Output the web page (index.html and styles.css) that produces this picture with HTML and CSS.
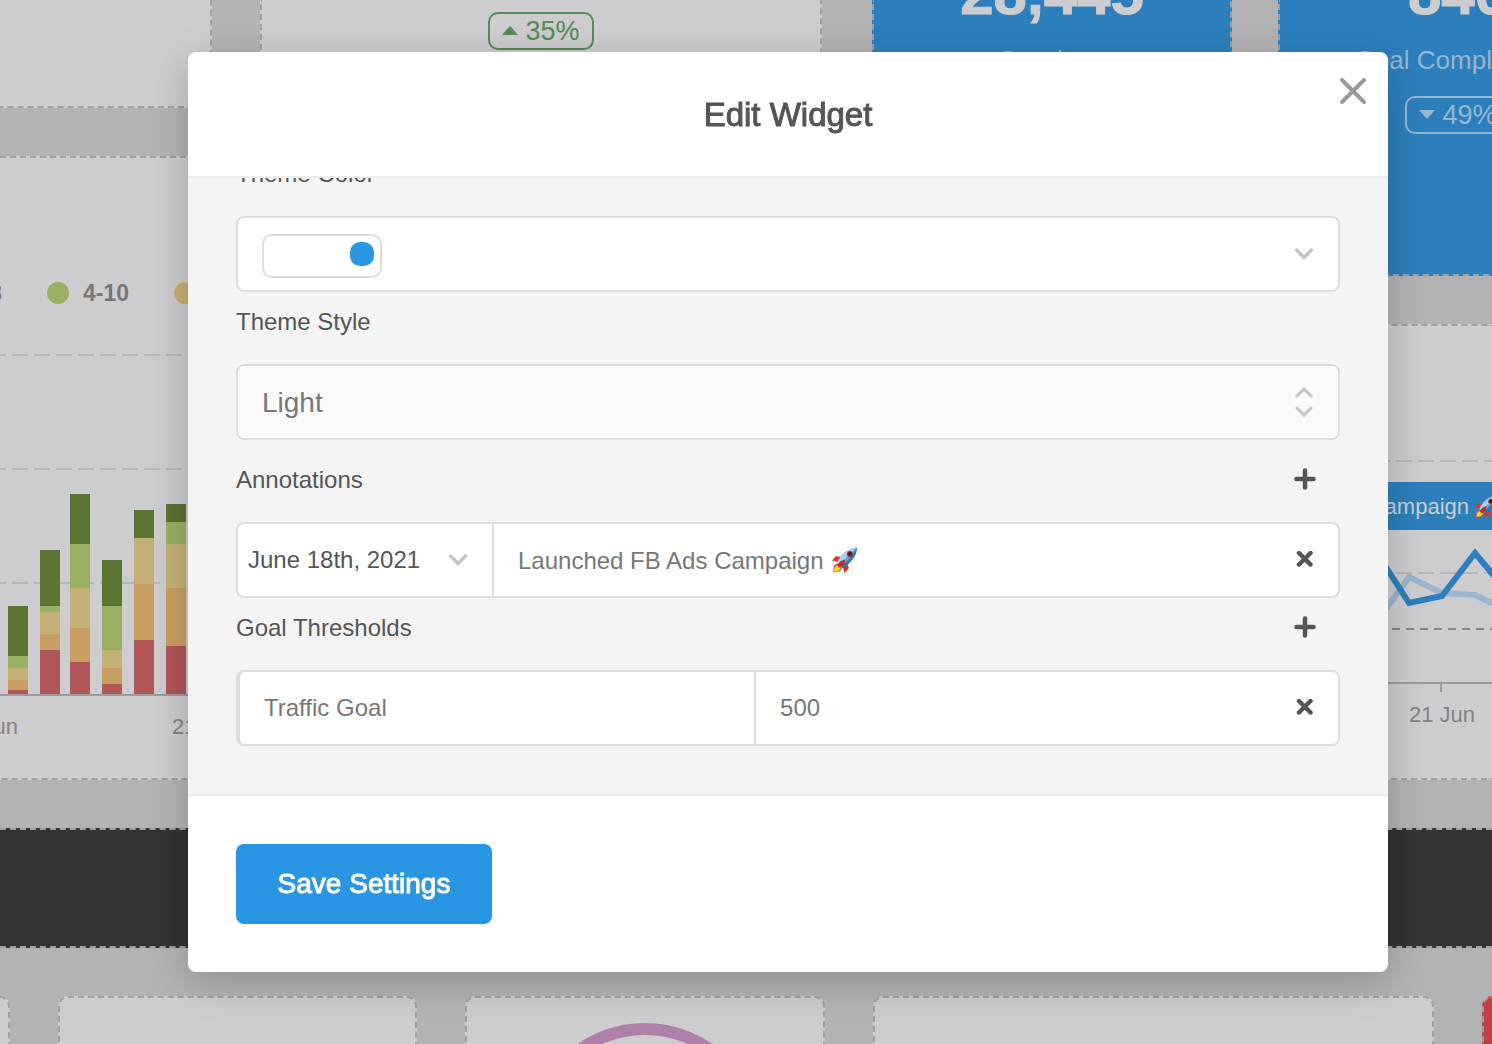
FILE: index.html
```html
<!DOCTYPE html>
<html lang="en">
    <head>
        <meta charset="utf-8">
        <meta name="viewport" content="width=device-width">
        <title>Edit Widget</title>
        <link rel="stylesheet" href="styles.css">
    </head>
    <body>
        <!-- Shared icons -->
        <svg class="defs" aria-hidden="true">
            <symbol id="rocket" viewBox="0 0 24 24">
                <path d="M9 9.500 L3.500 8.500 L0 12.500 L5.500 13.500 Z" fill="#e8301c"/>
                <path d="M14.500 15 L15.500 19.500 L11.500 24 L10 18 Z" fill="#e8301c"/>
                <path d="M4.500 15 L1.500 17.500 L1 23.500 L7 22.500 L9.500 19.500 Z" fill="#f0611c"/>
                <path d="M5 17 L2.500 19 L1.500 23 L6 22 L8 19.500 Z" fill="#fcd62c"/>
                <path d="M4.500 14.500 C8 7 15 1 23 0.500 C23.500 8 17 15.500 9.500 19.500 Z" fill="#2b78b4"/>
                <path d="M4.500 14.500 C8 7 15 1 23 0.500 L6.800 17 Z" fill="#a9d3ec"/>
                <path d="M6.500 16 C11 12 17 6 23 0.500 C19 8 14 13 8.500 17.800 Z" fill="#5fa8d8"/>
                <path d="M8 13 L12 11.500 L11.500 15.500 L7 19 L5 16.500 Z" fill="#c9281c"/>
                <circle cx="16.500" cy="6.500" r="2.700" fill="#b3211c"/>
                <circle cx="16.500" cy="6.500" r="1.600" fill="#14263a"/>
            </symbol>
            <symbol id="chevron" viewBox="0 0 20 12">
                <path d="M2.500 2 L10 9.500 L17.500 2" fill="none" stroke="#c4c4c4" stroke-width="3.500" stroke-linecap="round"/>
            </symbol>
            <symbol id="plus" viewBox="0 0 22 22">
                <path d="M11 2.500 V19.500 M2.500 11 H19.500" stroke="#555" stroke-width="4.500" stroke-linecap="round"/>
            </symbol>
            <symbol id="remove" viewBox="0 0 18 18">
                <path d="M3 2 L14.500 13.500 M14.500 2 L3 13.500" stroke="#555" stroke-width="4.500" stroke-linecap="round"/>
            </symbol>
        </svg>

        <main class="dashboard">
            <div class="top">
                <div class="left-col">
                    <div class="left-row">
                        <section class="card cut-top cut-left"></section>
                        <section class="card cut-top">
                            <span class="pill up"><svg width="16" height="10"><path d="M0 9 L8 0 L16 9 Z" fill="currentColor"/></svg>35%</span>
                        </section>
                    </div>
                    <section class="card cut-left bar-card">
                        <div class="legend">
                            <span class="legend-first">3</span>
                            <span class="legend-item"><i class="dot light-green"></i>4-10</span>
                            <span class="legend-item"><i class="dot yellow"></i>11-20</span>
                        </div>
                        <svg class="plot" viewBox="0 305 820 450" width="820" height="450">
                            <path class="grid" d="M-10 355 H820 M-10 469 H820 M-10 583 H820"/>
                            <g fill="#5a7432">
                                <rect x="8" y="606" width="20" height="50"/>
                                <rect x="40" y="550" width="20" height="56"/>
                                <rect x="70" y="494" width="20" height="50"/>
                                <rect x="102" y="560" width="20" height="46"/>
                                <rect x="134" y="510" width="20" height="28"/>
                                <rect x="166" y="504" width="20" height="18"/>
                            </g>
                            <g fill="#97b062">
                                <rect x="8" y="656" width="20" height="12"/>
                                <rect x="40" y="606" width="20" height="6"/>
                                <rect x="70" y="544" width="20" height="44"/>
                                <rect x="102" y="606" width="20" height="44"/>
                                <rect x="166" y="522" width="20" height="22"/>
                            </g>
                            <g fill="#c5b177">
                                <rect x="8" y="668" width="20" height="12"/>
                                <rect x="40" y="612" width="20" height="22"/>
                                <rect x="70" y="588" width="20" height="40"/>
                                <rect x="102" y="650" width="20" height="18"/>
                                <rect x="134" y="538" width="20" height="46"/>
                                <rect x="166" y="544" width="20" height="44"/>
                            </g>
                            <g fill="#c89f61">
                                <rect x="8" y="680" width="20" height="10"/>
                                <rect x="40" y="634" width="20" height="16"/>
                                <rect x="70" y="628" width="20" height="34"/>
                                <rect x="102" y="668" width="20" height="16"/>
                                <rect x="134" y="584" width="20" height="56"/>
                                <rect x="166" y="588" width="20" height="58"/>
                            </g>
                            <g fill="#b05658">
                                <rect x="8" y="690" width="20" height="4"/>
                                <rect x="40" y="650" width="20" height="44"/>
                                <rect x="70" y="662" width="20" height="32"/>
                                <rect x="102" y="684" width="20" height="10"/>
                                <rect x="134" y="640" width="20" height="54"/>
                                <rect x="166" y="646" width="20" height="48"/>
                            </g>
                            <path class="axis" d="M0 695 H820"/>
                            <text class="tick" x="18" y="734" text-anchor="end">14 Jun</text>
                            <text class="tick" x="172" y="734">21 Jun</text>
                        </svg>
                    </section>
                </div>
                <div class="right-col">
                    <div class="right-row">
                        <section class="card blue cut-top">
                            <div class="metric">
                                <strong>28,445</strong>
                                <span>Sessions</span>
                            </div>
                        </section>
                        <section class="card blue cut-top cut-right">
                            <div class="metric">
                                <strong>840</strong>
                                <span>Goal Completions</span>
                                <span class="pill down"><svg width="16" height="10"><path d="M0 0 L16 0 L8 9 Z" fill="currentColor"/></svg>49%</span>
                            </div>
                        </section>
                    </div>
                    <section class="card cut-right">
                        <svg class="plot" viewBox="874 326 620 440" width="620" height="440">
                            <path class="grid" d="M1374 461 H1494 M1374 573 H1494"/>
                            <path d="M1392 629 H1494" stroke="#888" stroke-width="2" stroke-dasharray="8 6"/>
                            <path class="axis" d="M874 683 H1494 M1441 683 V692"/>
                            <path d="M1375 624 L1409 577 L1442 593 L1475 595 L1509 611" fill="none" stroke="#9bb5cc" stroke-width="6"/>
                            <path d="M1375 550 L1409 603 L1442 596 L1475 553 L1509 594" fill="none" stroke="#2c7fbc" stroke-width="6"/>
                            <rect x="1180" y="482" width="320" height="48" fill="#2c7fbc"/>
                            <text class="flag" x="1469" y="514" text-anchor="end">Launched FB Ads Campaign</text>
                            <use href="#rocket" x="1475" y="495" width="23" height="23"/>
                            <text class="tick" x="1442" y="722" text-anchor="middle">21 Jun</text>
                        </svg>
                    </section>
                </div>
            </div>
            <section class="band"></section>
            <div class="bottom">
                <section class="card cut-left"></section>
                <section class="card"></section>
                <section class="card donut">
                    <svg width="240" height="240"><circle cx="120" cy="120" r="113" fill="none" stroke="#b081a8" stroke-width="12"/></svg>
                </section>
                <section class="card"></section>
                <section class="card red cut-right"></section>
            </div>
        </main>

        <div class="overlay">
            <div class="modal" role="dialog" aria-labelledby="modalTitle">
                <header class="modal-header">
                    <h1 id="modalTitle">Edit Widget</h1>
                    <button class="close" type="button" aria-label="Close">
                        <svg width="28" height="28" viewBox="0 0 28 28"><path d="M3 3 L25 25 M25 3 L3 25" stroke="#999" stroke-width="4" stroke-linecap="round"/></svg>
                    </button>
                </header>

                <div class="modal-body">
                    <form id="widgetForm" class="form">
                        <div class="field">
                            <label for="color">Theme Color</label>
                            <button id="color" class="box color" type="button">
                                <span class="swatch"><span class="swatch-dot"></span></span>
                                <svg width="20" height="12"><use href="#chevron"/></svg>
                            </button>
                        </div>

                        <div class="field">
                            <label for="style">Theme Style</label>
                            <div class="box style">
                                <select id="style">
                                    <option>Light</option>
                                    <option>Dark</option>
                                </select>
                                <svg class="updown" width="20" height="32" viewBox="0 0 20 32"><path d="M3 10 L10 3 L17 10 M3 22 L10 29 L17 22" fill="none" stroke="#c4c4c4" stroke-width="3" stroke-linecap="round"/></svg>
                            </div>
                        </div>

                        <div class="field annotations">
                            <div class="field-head">
                                <label for="annotation">Annotations</label>
                                <button class="icon" type="button" aria-label="Add annotation"><svg width="22" height="22"><use href="#plus"/></svg></button>
                            </div>
                            <div class="box">
                                <button class="date" type="button">June 18th, 2021<svg width="20" height="12"><use href="#chevron"/></svg></button>
                                <div class="note">
                                    <input id="annotation" type="text" value="Launched FB Ads Campaign">
                                    <svg width="26" height="26"><use href="#rocket"/></svg>
                                </div>
                                <button class="icon" type="button" aria-label="Remove annotation"><svg width="18" height="18"><use href="#remove"/></svg></button>
                            </div>
                        </div>

                        <div class="field">
                            <div class="field-head">
                                <label for="goal">Goal Thresholds</label>
                                <button class="icon" type="button" aria-label="Add goal"><svg width="22" height="22"><use href="#plus"/></svg></button>
                            </div>
                            <div class="box goal">
                                <input id="goal" class="goal-name" type="text" value="Traffic Goal">
                                <input class="goal-value" type="text" value="500" aria-label="Goal value">
                                <button class="icon" type="button" aria-label="Remove goal"><svg width="18" height="18"><use href="#remove"/></svg></button>
                            </div>
                        </div>
                    </form>
                </div>

                <footer class="modal-footer">
                    <button class="save" type="submit" form="widgetForm">Save Settings</button>
                </footer>
            </div>
        </div>
    </body>
</html>
```
FILE: styles.css
```css
* {
    box-sizing: border-box;
}
body {
    margin: 0;
    height: 100vh;
    overflow: hidden;
    font-family: "Liberation Sans", Arial, sans-serif;
    background-color: #b3b3b5;
    color: #555;
}
button, input, select {
    font-family: inherit;
    font-size: 24px;
    color: inherit;
    background: none;
    border: none;
    border-radius: 0;
    margin: 0;
    padding: 0;
}
button {
    cursor: pointer;
}
svg {
    display: block;
    flex: none;
}
.defs {
    position: absolute;
    width: 0;
    height: 0;
}

/* dashboard */
.dashboard {
    height: 100vh;
    overflow: hidden;
    display: flex;
    flex-direction: column;
    gap: 48px;
}
.top {
    display: grid;
    grid-template-columns: 822fr 620fr;
    gap: 50px;
}
.left-col {
    display: grid;
    grid-template-rows: 108px 624px;
    gap: 48px;
    min-width: 0;
}
.left-row {
    display: grid;
    grid-template-columns: 212fr 562fr;
    gap: 48px;
}
.right-col {
    display: grid;
    grid-template-rows: 276px 456px;
    gap: 48px;
    min-width: 0;
}
.right-row {
    display: grid;
    grid-template-columns: 360fr 214fr;
    gap: 46px;
}
.card {
    min-width: 0;
    overflow: hidden;
    background-color: #cdcdcf;
    border: 2px dashed #a0a0a2;
    border-radius: 10px;
}
.card.blue {
    background-color: #2c7fbc;
}
.card.red {
    background-color: #c14048;
}
.cut-top {
    border-top: none;
    border-top-left-radius: 0;
    border-top-right-radius: 0;
}
.cut-left {
    border-left: none;
    border-top-left-radius: 0;
    border-bottom-left-radius: 0;
}
.cut-right {
    border-right: none;
    border-top-right-radius: 0;
    border-bottom-right-radius: 0;
}
.pill {
    display: flex;
    align-items: center;
    justify-content: center;
    gap: 7px;
    width: 106px;
    height: 38px;
    font-size: 27px;
    border: 2px solid;
    border-radius: 10px;
}
.up {
    margin: 12px auto 0;
    color: #558b55;
}
.metric {
    display: flex;
    flex-direction: column;
    align-items: center;
    gap: 20px;
    width: 356px;
    font-size: 26px;
    line-height: 32px;
    color: #97b6d0;
}
.metric strong {
    margin-top: -36px;
    font-size: 60px;
    line-height: 60px;
    color: #cdcdcf;
    -webkit-text-stroke: 1px #cdcdcf;
}
.band {
    flex: none;
    height: 120px;
    background-color: #333335;
    border-top: 2px dashed #a0a0a2;
    border-bottom: 2px dashed #a0a0a2;
}
.bottom {
    flex: 1;
    display: grid;
    grid-template-columns: 10fr 360fr 360fr 562fr 10fr;
    gap: 48px;
}
.bottom .card {
    border-bottom: none;
    border-bottom-left-radius: 0;
    border-bottom-right-radius: 0;
}
.donut {
    display: flex;
    justify-content: center;
    padding-top: 24px;
}

/* charts */
.bar-card {
    padding-top: 123px;
}
.legend {
    display: flex;
    gap: 45px;
    height: 24px;
    line-height: 24px;
    font-size: 23px;
    font-weight: bold;
    color: #777;
}
.legend-first {
    display: flex;
    justify-content: flex-end;
    width: 2px;
}
.legend-item {
    display: flex;
    align-items: center;
    gap: 14px;
}
.dot {
    width: 22px;
    height: 22px;
    border-radius: 50%;
}
.light-green {
    background-color: #97b062;
}
.yellow {
    background-color: #c5b177;
}
.grid {
    stroke: #b6b6b8;
    stroke-width: 2;
    stroke-dasharray: 16 6;
}
.axis {
    stroke: #9c9c9e;
    stroke-width: 2;
}
.tick {
    font-size: 22px;
    fill: #828284;
}
.flag {
    font-size: 22px;
    fill: #cdcdcf;
}

/* modal */
.overlay {
    position: fixed;
    top: 0;
    right: 0;
    bottom: 0;
    left: 0;
    padding: 52px 104px 0 188px;
}
.modal {
    background-color: #fff;
    border-radius: 8px;
    box-shadow: 0 10px 40px rgba(0, 0, 0, 0.2);
}
.modal-header {
    position: relative;
    padding: 43px 0 41px;
    border-bottom: 2px solid #ececec;
}
.modal-header h1 {
    margin: 0;
    text-align: center;
    font-size: 33px;
    font-weight: normal;
    line-height: 40px;
    -webkit-text-stroke: 1px #555;
}
.close {
    position: absolute;
    top: 25px;
    right: 21px;
}
.modal-body {
    overflow: hidden;
    padding: 0 48px 48px;
    background-color: #f4f4f4;
    border-bottom: 2px solid #ececec;
}
.form {
    margin-top: -34px; /* scrolled part of the form */
}
.field label {
    display: block;
    padding: 16px 0 28px;
    font-size: 24px;
    line-height: 28px;
}
.annotations {
    padding-top: 10px;
}
.field-head {
    display: flex;
    justify-content: space-between;
    align-items: center;
}
.field-head .icon {
    padding: 0 24px 14px;
}
.box {
    display: flex;
    align-items: center;
    width: 100%;
    height: 76px;
    background-color: #fff;
    border: 2px solid #ddd;
    border-radius: 8px;
}
.color {
    justify-content: space-between;
    padding: 0 24px;
}
.swatch {
    display: flex;
    justify-content: flex-end;
    width: 120px;
    height: 44px;
    margin-top: 4px;
    padding: 6px;
    border: 2px solid #ddd;
    border-radius: 10px;
}
.swatch-dot {
    width: 24px;
    height: 24px;
    border-radius: 10px;
    background-color: #2896e2;
}
.style {
    position: relative;
    background-color: #fafafa;
}
.style select {
    width: 100%;
    height: 72px;
    padding: 0 24px;
    font-size: 28px;
    color: #777;
    appearance: none;
}
.updown {
    position: absolute;
    right: 24px;
    pointer-events: none;
}
.date {
    display: flex;
    justify-content: space-between;
    align-items: center;
    width: 256px;
    height: 72px;
    padding: 0 24px 0 10px;
    border-right: 2px solid #ddd;
}
.note {
    flex: 1;
    display: flex;
    align-items: center;
    gap: 4px;
    padding-left: 24px;
}
.note input {
    width: 310px;
    height: 72px;
    padding-top: 2px;
    color: #777;
}
.box .icon {
    padding: 0 24px 0 0;
}
.goal {
    border-left-width: 4px;
}
.goal input {
    height: 72px;
    padding: 0 24px;
    color: #777;
}
.goal .goal-name {
    flex: 0 0 47%;
    min-width: 0;
    border-right: 2px solid #ddd;
}
.goal .goal-value {
    flex: 1;
    min-width: 0;
}
.modal-footer {
    padding: 48px;
}
.save {
    display: block;
    width: 256px;
    height: 80px;
    font-size: 28px;
    color: #fff;
    background-color: #2896e2;
    border-radius: 8px;
    -webkit-text-stroke: 1px #fff;
}
```
